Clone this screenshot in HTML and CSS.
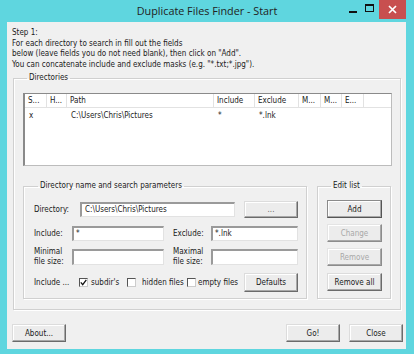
FILE: index.html
```html
<!DOCTYPE html>
<html lang="en">
<head>
    <meta charset="UTF-8">
    <meta name="viewport" content="width=device-width, initial-scale=1.0">
    <title>Duplicate Files Finder - Start</title>
    <link rel="stylesheet" href="styles.css">
</head>
<body>

    <div class="window">
        <!-- Title bar -->
        <div class="titlebar">
            <div class="title">Duplicate Files Finder - Start</div>
            <div class="win-icons">
                <span class="min-bar"></span>
                <span class="max-box"></span>
            </div>
            <div class="win-btn close">
                <svg width="9" height="9" viewBox="0 0 9 9"><path d="M1 1 L8 8 M8 1 L1 8" stroke="#fff" stroke-width="1.7"/></svg>
            </div>
        </div>

        <!-- Client area -->
        <div class="client">
            <div class="intro">
                Step 1:<br>
                For each directory to search in fill out the fields<br>
                below (leave fields you do not need blank), then click on "Add".<br>
                You can concatenate include and exclude masks (e.g. "*.txt;*.jpg").
            </div>

            <fieldset class="group outer">
                <legend>Directories</legend>

                <div class="listview">
                    <div class="lv-row lv-head">
                        <span>S...</span><span>H...</span><span>Path</span><span>Include</span><span>Exclude</span><span>M...</span><span>M...</span><span>E...</span><span class="filler"></span>
                    </div>
                    <div class="lv-row lv-item">
                        <span>x</span><span></span><span>C:\Users\Chris\Pictures</span><span>*</span><span>*.lnk</span><span></span><span></span><span></span><span class="filler"></span>
                    </div>
                </div>

                <div class="groups">
                    <fieldset class="group params">
                        <legend>Directory name and search parameters</legend>

                        <div class="row r1">
                            <label class="lbl dir-lbl">Directory:</label>
                            <div class="field dir-field">C:\Users\Chris\Pictures</div>
                            <button class="btn browse">...</button>
                        </div>

                        <div class="row r2">
                            <label class="lbl short">Include:</label>
                            <div class="field inc-field">*</div>
                            <label class="lbl short">Exclude:</label>
                            <div class="field exc-field">*.lnk</div>
                        </div>

                        <div class="row r3">
                            <label class="lbl short two">Minimal<br>file size:</label>
                            <div class="field inc-field"></div>
                            <label class="lbl short two">Maximal<br>file size:</label>
                            <div class="field exc-field"></div>
                        </div>

                        <div class="row r4">
                            <label class="lbl inc-lbl">Include ...</label>
                            <span class="check on"><svg width="7" height="7"><path d="M0.8 3.4 L2.7 5.6 L6.3 0.9" fill="none" stroke="#111" stroke-width="1.3"/></svg></span>
                            <span class="check-lbl c1">subdir's</span>
                            <span class="check"></span>
                            <span class="check-lbl c2">hidden files</span>
                            <span class="check"></span>
                            <span class="check-lbl c3">empty files</span>
                            <button class="btn defaults">Defaults</button>
                        </div>
                    </fieldset>

                    <fieldset class="group edit">
                        <legend>Edit list</legend>
                        <button class="btn side default">Add</button>
                        <button class="btn side disabled">Change</button>
                        <button class="btn side disabled">Remove</button>
                        <button class="btn side">Remove all</button>
                    </fieldset>
                </div>
            </fieldset>

            <div class="bottom">
                <button class="btn bottom-btn">About...</button>
                <div class="spacer"></div>
                <button class="btn bottom-btn">Go!</button>
                <button class="btn bottom-btn">Close</button>
            </div>
        </div>
    </div>

</body>
</html>
```

FILE: styles.css
```css
/* Window chrome */
body {
    margin: 0;
    padding: 0;
    background-color: #5fd6df;
    font-family: "DejaVu Sans Condensed", "DejaVu Sans", sans-serif;
    font-size: 8px;
    color: #1a1a1a;
}

.window {
    width: 414px;
    height: 354px;
    overflow: hidden;
    background-color: #5fd6df;
}

.titlebar {
    height: 22px;
    display: flex;
    align-items: flex-start;
    padding-right: 8px;
}

.title {
    flex: 1;
    text-align: center;
    line-height: 22px;
    padding-left: 70px;
    font-family: "Open Sans", "Liberation Sans", sans-serif;
    font-size: 10.8px;
    color: #222;
}

.win-icons {
    width: 32px;
    height: 19px;
    margin-right: 3px;
    flex-shrink: 0;
    display: flex;
    align-items: flex-start;
    gap: 8px;
    padding-left: 5px;
    box-sizing: border-box;
}

.min-bar {
    display: block;
    width: 8px;
    height: 2px;
    margin-top: 11px;
    background-color: #111;
}

.max-box {
    display: block;
    width: 9px;
    height: 8px;
    margin-top: 4px;
    box-sizing: border-box;
    border: 1px solid #111;
    border-top-width: 2px;
}

.win-btn.close {
    width: 27px;
    height: 19px;
    display: flex;
    align-items: center;
    justify-content: center;
    flex-shrink: 0;
    background-color: #c84f4f;
}

.client {
    margin: 0 8px 0 7px;
    height: 327px;
    background-color: #f0f0f0;
    display: flex;
    flex-direction: column;
}

.intro {
    padding: 6px 0 0 5px;
    line-height: 10.5px;
    height: 45px;
}

/* Group boxes */
.group {
    border: 1px solid #d0d0d0;
    box-shadow: inset 1px 1px 0 #fff, 1px 1px 0 #fff;
    margin: 0;
    padding: 0;
    min-width: 0;
}

.group legend {
    padding: 0 2px;
    margin-left: 4px;
    line-height: 10px;
}

.outer {
    margin: 0 5px 0 6px;
    padding: 10px 8px 10px 9px;
}

/* List view */
.listview {
    height: 71px;
    background-color: #fff;
    border: 1px solid #bcbcbc;
    border-top-color: #8a8a8a;
    border-left: 2px solid #8a8a8a;
}

.lv-row {
    display: grid;
    grid-template-columns: 22px 20px 147px 41px 44px 22px 21px 22px 1fr;
}

.lv-head {
    height: 13px;
    line-height: 13px;
    border-bottom: 1px solid #e2e2e2;
}

.lv-head span {
    padding-left: 3px;
    border-right: 1px solid #e2e2e2;
}

.lv-head .filler {
    border-right: none;
}

.lv-item {
    height: 15px;
    line-height: 15px;
}

.lv-item span {
    padding-left: 4px;
}

.groups {
    display: flex;
    gap: 10px;
    margin-top: 15px;
}

.params {
    width: 284px;
    height: 118px;
    padding: 9px 8px 0 10px;
    box-sizing: border-box;
}

.edit {
    width: 74px;
    height: 118px;
    padding: 9px 0 0 9px;
    box-sizing: border-box;
    display: flex;
    flex-direction: column;
}

/* Rows in the parameters box */
.row {
    display: flex;
    align-items: center;
    height: 18px;
}

.r2 { margin-top: 6px; }
.r3 { margin-top: 6px; }
.r4 { margin-top: 7px; }

.lbl {
    flex-shrink: 0;
}

.dir-lbl { width: 46px; }
.short { width: 38px; }
.inc-lbl { width: 45px; }

.lbl.two {
    line-height: 10px;
}

.field {
    height: 15px;
    box-sizing: border-box;
    background-color: #fff;
    border: 1px solid #e2e2e2;
    border-top: 2px solid #9a9a9a;
    border-left: 2px solid #9a9a9a;
    line-height: 12px;
    padding-left: 2px;
    white-space: nowrap;
    overflow: hidden;
}

.r3 .field {
    height: 16px;
}

.dir-field {
    width: 155px;
    margin-right: 9px;
    padding-left: 3px;
}

.inc-field {
    width: 92px;
    margin-right: 9px;
}

.exc-field {
    width: 87px;
}

/* Checkboxes */
.check {
    width: 9px;
    height: 9px;
    box-sizing: border-box;
    border: 1px solid #555;
    border-right-color: #ccc;
    border-bottom-color: #ccc;
    background-color: #fff;
    display: flex;
    align-items: center;
    justify-content: center;
    flex-shrink: 0;
}

.check-lbl {
    white-space: nowrap;
    flex-shrink: 0;
}

.c1 { width: 36px; margin-left: 3px; }
.c2 { width: 45px; margin-left: 6px; }
.c3 { margin-left: 2px; }

/* Buttons */
.btn {
    font-family: inherit;
    font-size: inherit;
    color: #1a1a1a;
    background-color: #ececec;
    border: 1px solid;
    border-color: #dcdcdc #6b6b6b #6b6b6b #dcdcdc;
    box-shadow: inset -1px -1px 0 #a8a8a8, inset 1px 1px 0 #fff;
    height: 18px;
    padding: 0;
    margin: 0;
    flex-shrink: 0;
}

.browse {
    width: 54px;
    height: 17px;
    color: #666;
}

.defaults {
    width: 54px;
    height: 19px;
    margin-left: auto;
}

.side {
    width: 55px;
    margin-bottom: 6px;
}

.side:nth-of-type(3) {
    margin-bottom: 7px;
}

.default {
    border-color: #8a8a8a #555 #555 #8a8a8a;
}

.disabled {
    color: #a8a8a8;
    border-color: #e4e4e4 #8c8c8c #8c8c8c #e4e4e4;
}

.bottom {
    display: flex;
    gap: 9px;
    margin-top: 14px;
    padding: 0 3px 0 5px;
}

.spacer {
    flex: 1;
}

.bottom-btn {
    width: 54px;
}
```
